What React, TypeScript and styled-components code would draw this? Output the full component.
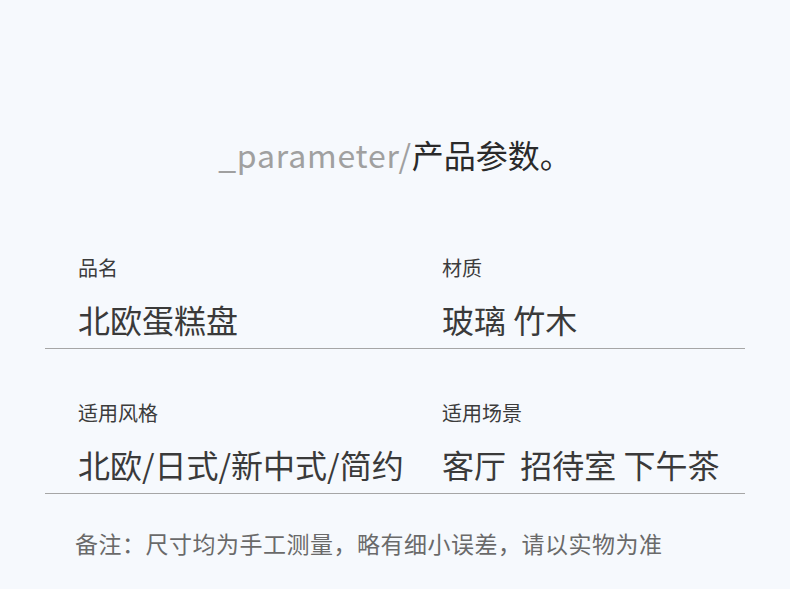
import styled, { createGlobalStyle } from 'styled-components'

const GlobalStyle = createGlobalStyle`
  html, body {
    margin: 0;
    padding: 0;
    background: #f6f9fd;
  }
  body {
    font-family: "Noto Sans CJK SC", "Noto Sans", sans-serif;
  }
`

const Page = styled.div`
  width: 790px;
  height: 589px;
  background: #f6f9fd;
  padding-top: 132px;
  box-sizing: border-box;
  overflow: hidden;
`

const Heading = styled.h1`
  margin: 0 0 80px;
  text-align: center;
  font-size: 32px;
  font-weight: 400;
  line-height: 44px;
  color: #2a2a2a;
`

const HeadingLatin = styled.span`
  color: #a0a0a0;
  letter-spacing: 0.8px;
`

const Table = styled.div`
  width: 700px;
  margin: 0 auto;
`

const Row = styled.div`
  display: grid;
  grid-template-columns: 364px 1fr;
  padding: 0 0 9px 33px;
  border-bottom: 1px solid #a6a6a6;
  margin-bottom: 52px;

  &:last-child {
    margin-bottom: 0;
  }
`

const Cell = styled.div`
  display: flex;
  flex-direction: column;
  gap: 19px;
`

const Label = styled.div`
  font-size: 20px;
  line-height: 24px;
  color: #3c3c3c;
`

const Value = styled.div`
  font-size: 32px;
  line-height: 40px;
  color: #3a3a3a;
  white-space: pre;
`

const Note = styled.p`
  margin: 34px 0 0 75px;
  font-size: 23px;
  line-height: 30px;
  letter-spacing: 0.5px;
  color: #6a6a6a;
`

const params = [
  [
    { label: '品名', value: '北欧蛋糕盘' },
    { label: '材质', value: '玻璃 竹木' }
  ],
  [
    { label: '适用风格', value: '北欧/日式/新中式/简约' },
    { label: '适用场景', value: '客厅  招待室 下午茶' }
  ]
]

function App() {
  return (
    <>
      <GlobalStyle />
      <Page>
        <Heading>
          <HeadingLatin>_parameter/</HeadingLatin>产品参数。
        </Heading>
        <Table>
          {params.map((row, i) => (
            <Row key={i}>
              {row.map(cell => (
                <Cell key={cell.label}>
                  <Label>{cell.label}</Label>
                  <Value>{cell.value}</Value>
                </Cell>
              ))}
            </Row>
          ))}
        </Table>
        <Note>备注：尺寸均为手工测量，略有细小误差，请以实物为准</Note>
      </Page>
    </>
  )
}

export default App
